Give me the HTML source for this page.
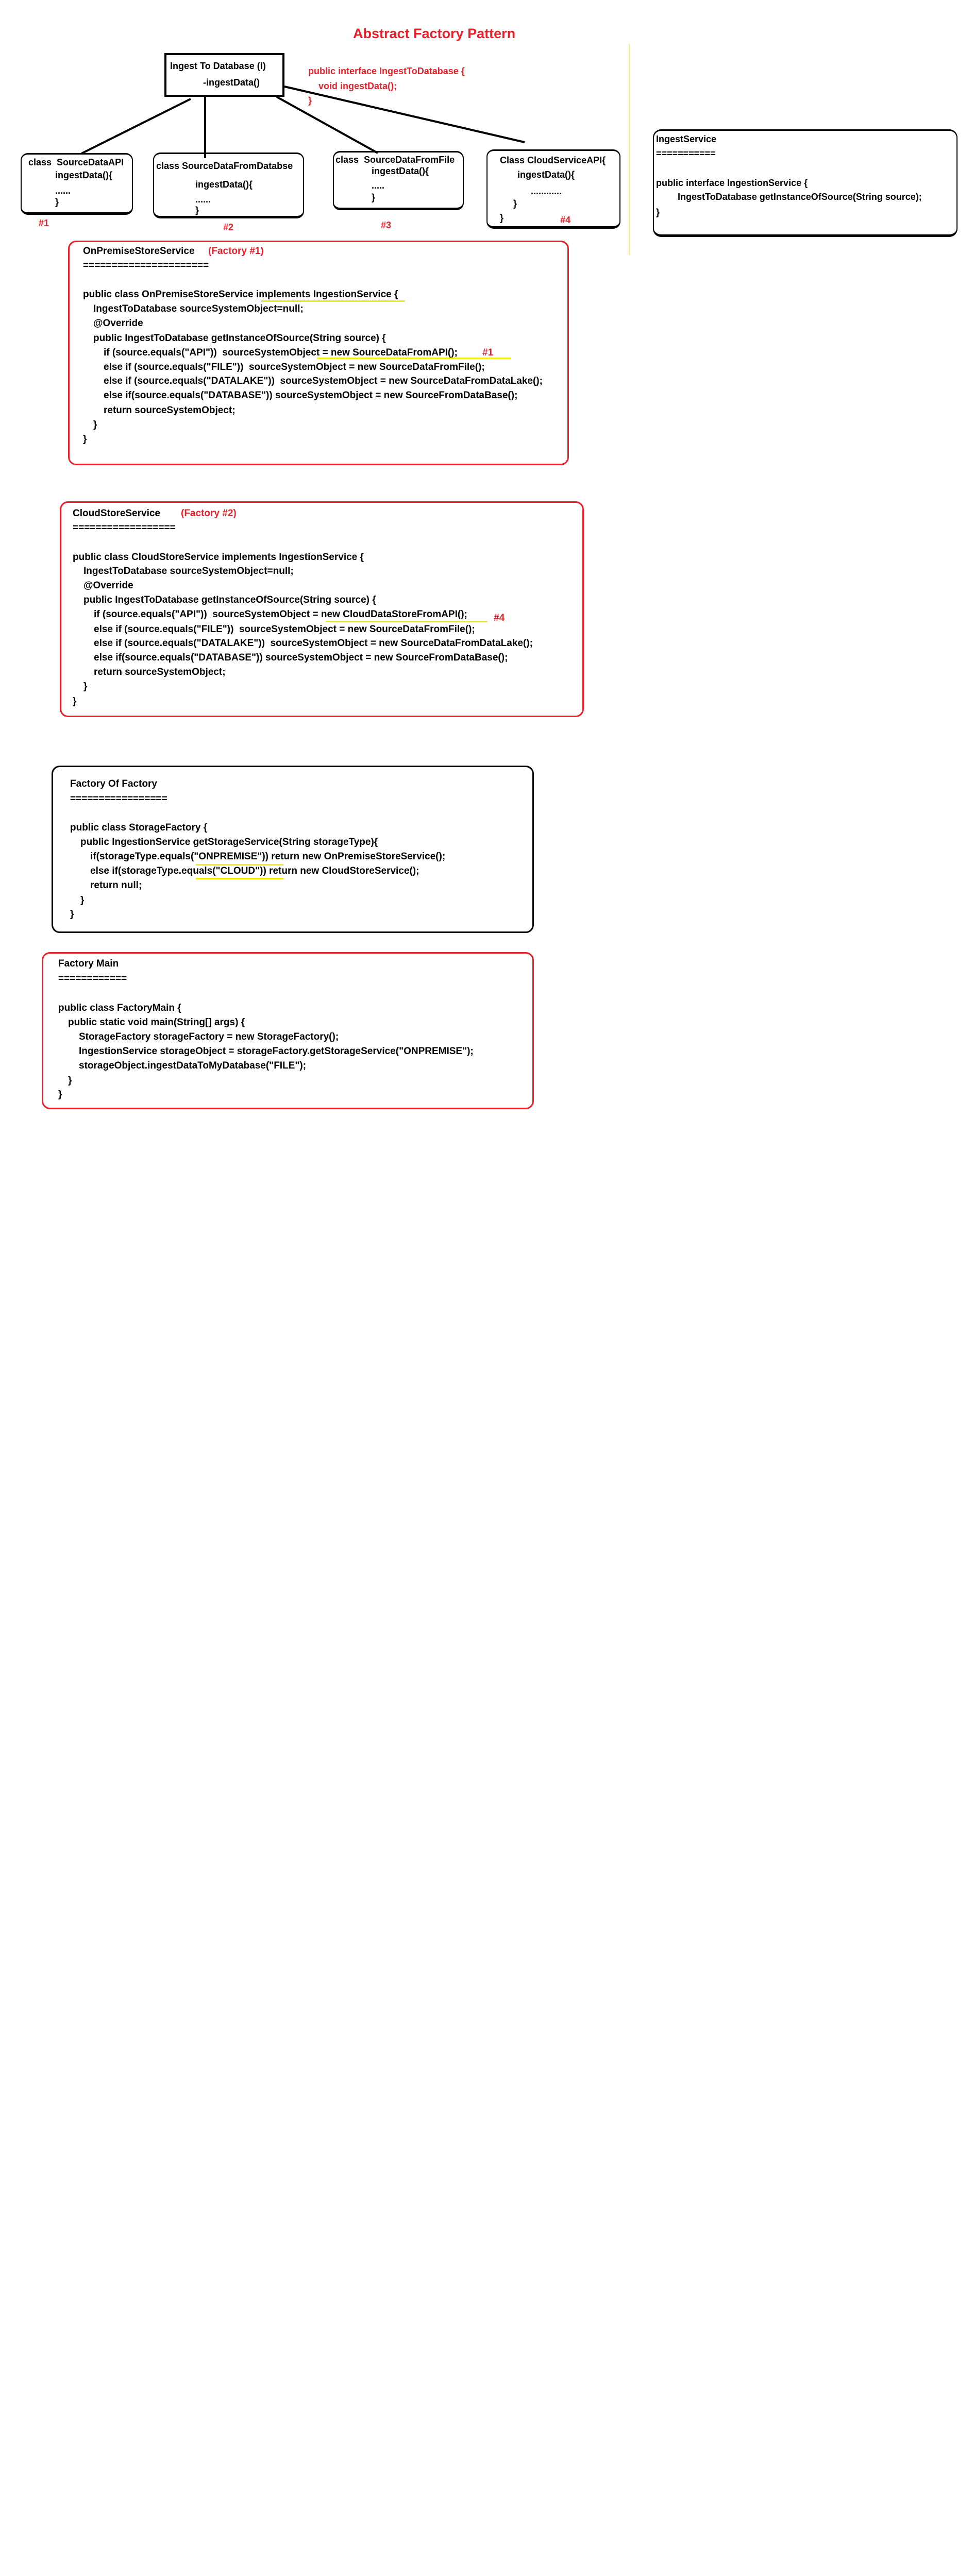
<!DOCTYPE html>
<html><head><meta charset="utf-8">
<style>
html,body{margin:0;padding:0;background:#fff;}
body{width:1890px;height:6000px;position:relative;overflow:hidden;font-family:"Liberation Sans",sans-serif;}
.t{position:absolute;font-weight:bold;font-size:19px;line-height:22px;white-space:pre;color:#000;}
.s{font-size:18px;}
.r{color:#e8202a;}
.box{position:absolute;box-sizing:border-box;}
.rb{border:3px solid #e8202a;border-radius:16px;}
.bb{border:3px solid #000;border-radius:16px;}
.sb{border:2px solid #000;border-top-width:3px;border-bottom-width:5px;border-radius:14px;}
.y{position:absolute;height:3px;background:#f7ea1a;}
</style></head><body>

<div class="t r" style="left:685px;top:50px;font-size:27px;line-height:30px;">Abstract Factory Pattern</div>

<div style="position:absolute;left:1220px;top:85px;width:2px;height:410px;background:#f5ec7a;"></div>

<svg style="position:absolute;left:0;top:0" width="1890" height="500">
<g stroke="#000" stroke-width="4" fill="none">
<line x1="370" y1="192" x2="158" y2="298"/>
<line x1="398" y1="188" x2="398" y2="307"/>
<line x1="537" y1="188" x2="733" y2="297"/>
<line x1="552" y1="168" x2="1018" y2="276"/>
</g></svg>

<div class="box" style="left:319px;top:103px;width:233px;height:85px;border:4px solid #000;background:#fff;"></div>
<div class="t s" style="left:330px;top:117px;">Ingest To Database (I)</div>
<div class="t s" style="left:394px;top:149px;">-ingestData()</div>
<div class="t s r" style="left:598px;top:127px;">public interface IngestToDatabase {</div>
<div class="t s r" style="left:618px;top:156px;">void ingestData();</div>
<div class="t s r" style="left:598px;top:184px;">}</div>

<div class="box sb" style="left:40px;top:297px;width:218px;height:120px;"></div>
<div class="t s" style="left:55px;top:304px;">class  SourceDataAPI</div>
<div class="t s" style="left:107px;top:329px;">ingestData(){</div>
<div class="t s" style="left:107px;top:359px;">......</div>
<div class="t s" style="left:107px;top:381px;">}</div>
<div class="t s r" style="left:75px;top:422px;">#1</div>

<div class="box sb" style="left:297px;top:296px;width:293px;height:128px;"></div>
<div class="t s" style="left:303px;top:311px;">class SourceDataFromDatabse</div>
<div class="t s" style="left:379px;top:347px;">ingestData(){</div>
<div class="t s" style="left:379px;top:376px;">......</div>
<div class="t s" style="left:379px;top:397px;">}</div>
<div class="t s r" style="left:433px;top:430px;">#2</div>

<div class="box sb" style="left:646px;top:293px;width:254px;height:115px;"></div>
<div class="t s" style="left:651px;top:299px;">class  SourceDataFromFile</div>
<div class="t s" style="left:721px;top:321px;">ingestData(){</div>
<div class="t s" style="left:721px;top:349px;">.....</div>
<div class="t s" style="left:721px;top:372px;">}</div>
<div class="t s r" style="left:739px;top:426px;">#3</div>

<div class="box sb" style="left:944px;top:290px;width:260px;height:154px;"></div>
<div class="t s" style="left:970px;top:300px;">Class CloudServiceAPI{</div>
<div class="t s" style="left:1004px;top:328px;">ingestData(){</div>
<div class="t s" style="left:1030px;top:360px;">............</div>
<div class="t s" style="left:996px;top:384px;">}</div>
<div class="t s" style="left:970px;top:412px;">}</div>
<div class="t s r" style="left:1087px;top:416px;">#4</div>

<div class="box sb" style="left:1267px;top:251px;width:591px;height:209px;border-radius:16px;"></div>
<div class="t s" style="left:1273px;top:259px;">IngestService</div>
<div class="t s" style="left:1273px;top:287px;">===========</div>
<div class="t s" style="left:1273px;top:344px;">public interface IngestionService {</div>
<div class="t s" style="left:1315px;top:371px;">IngestToDatabase getInstanceOfSource(String source);</div>
<div class="t s" style="left:1273px;top:401px;">}</div>

<!-- OnPremise -->
<div class="box rb" style="left:132px;top:467px;width:972px;height:436px;"></div>
<div class="t" style="left:161px;top:477px;">OnPremiseStoreService</div>
<div class="t r" style="left:404px;top:477px;">(Factory #1)</div>
<div class="t" style="left:161px;top:505px;">======================</div>
<div class="t" style="left:161px;top:561px;">public class OnPremiseStoreService implements IngestionService {</div>
<div class="t" style="left:181px;top:589px;">IngestToDatabase sourceSystemObject=null;</div>
<div class="t" style="left:181px;top:617px;">@Override</div>
<div class="t" style="left:181px;top:646px;">public IngestToDatabase getInstanceOfSource(String source) {</div>
<div class="t" style="left:201px;top:674px;">if (source.equals("API"))  sourceSystemObject = new SourceDataFromAPI();</div>
<div class="t r" style="left:936px;top:674px;">#1</div>
<div class="t" style="left:201px;top:702px;">else if (source.equals("FILE"))  sourceSystemObject = new SourceDataFromFile();</div>
<div class="t" style="left:201px;top:729px;">else if (source.equals("DATALAKE"))  sourceSystemObject = new SourceDataFromDataLake();</div>
<div class="t" style="left:201px;top:757px;">else if(source.equals("DATABASE")) sourceSystemObject = new SourceFromDataBase();</div>
<div class="t" style="left:201px;top:786px;">return sourceSystemObject;</div>
<div class="t" style="left:181px;top:814px;">}</div>
<div class="t" style="left:161px;top:842px;">}</div>
<div class="y" style="left:507px;top:583px;width:279px;"></div>
<div class="y" style="left:615px;top:694px;width:377px;"></div>

<!-- Cloud -->
<div class="box rb" style="left:116px;top:973px;width:1017px;height:419px;"></div>
<div class="t" style="left:141px;top:986px;">CloudStoreService</div>
<div class="t r" style="left:351px;top:986px;">(Factory #2)</div>
<div class="t" style="left:141px;top:1014px;">==================</div>
<div class="t" style="left:141px;top:1071px;">public class CloudStoreService implements IngestionService {</div>
<div class="t" style="left:162px;top:1098px;">IngestToDatabase sourceSystemObject=null;</div>
<div class="t" style="left:162px;top:1126px;">@Override</div>
<div class="t" style="left:162px;top:1154px;">public IngestToDatabase getInstanceOfSource(String source) {</div>
<div class="t" style="left:182px;top:1182px;">if (source.equals("API"))  sourceSystemObject = new CloudDataStoreFromAPI();</div>
<div class="t r" style="left:958px;top:1189px;">#4</div>
<div class="t" style="left:182px;top:1211px;">else if (source.equals("FILE"))  sourceSystemObject = new SourceDataFromFile();</div>
<div class="t" style="left:182px;top:1238px;">else if (source.equals("DATALAKE"))  sourceSystemObject = new SourceDataFromDataLake();</div>
<div class="t" style="left:182px;top:1266px;">else if(source.equals("DATABASE")) sourceSystemObject = new SourceFromDataBase();</div>
<div class="t" style="left:182px;top:1294px;">return sourceSystemObject;</div>
<div class="t" style="left:162px;top:1322px;">}</div>
<div class="t" style="left:141px;top:1351px;">}</div>
<div class="y" style="left:632px;top:1205px;width:314px;"></div>

<!-- Factory of Factory -->
<div class="box bb" style="left:100px;top:1486px;width:936px;height:325px;"></div>
<div class="t" style="left:136px;top:1511px;">Factory Of Factory</div>
<div class="t" style="left:136px;top:1540px;">=================</div>
<div class="t" style="left:136px;top:1596px;">public class StorageFactory {</div>
<div class="t" style="left:156px;top:1624px;">public IngestionService getStorageService(String storageType){</div>
<div class="t" style="left:175px;top:1652px;">if(storageType.equals("ONPREMISE")) return new OnPremiseStoreService();</div>
<div class="t" style="left:175px;top:1680px;">else if(storageType.equals("CLOUD")) return new CloudStoreService();</div>
<div class="t" style="left:175px;top:1708px;">return null;</div>
<div class="t" style="left:156px;top:1737px;">}</div>
<div class="t" style="left:136px;top:1764px;">}</div>
<div class="y" style="left:380px;top:1677px;width:170px;"></div>
<div class="y" style="left:380px;top:1704px;width:170px;"></div>

<!-- Factory Main -->
<div class="box rb" style="left:81px;top:1848px;width:955px;height:305px;"></div>
<div class="t" style="left:113px;top:1860px;">Factory Main</div>
<div class="t" style="left:113px;top:1889px;">============</div>
<div class="t" style="left:113px;top:1946px;">public class FactoryMain {</div>
<div class="t" style="left:132px;top:1974px;">public static void main(String[] args) {</div>
<div class="t" style="left:153px;top:2002px;">StorageFactory storageFactory = new StorageFactory();</div>
<div class="t" style="left:153px;top:2030px;">IngestionService storageObject = storageFactory.getStorageService("ONPREMISE");</div>
<div class="t" style="left:153px;top:2058px;">storageObject.ingestDataToMyDatabase("FILE");</div>
<div class="t" style="left:132px;top:2087px;">}</div>
<div class="t" style="left:113px;top:2114px;">}</div>

</body></html>
